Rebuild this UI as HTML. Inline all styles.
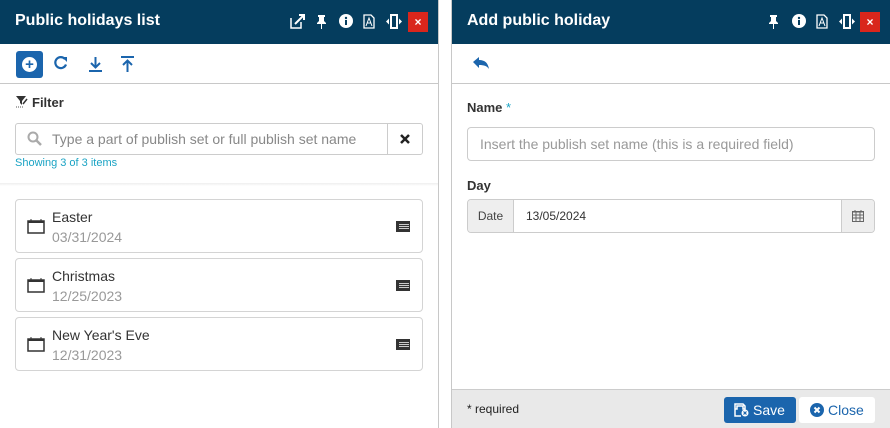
<!DOCTYPE html><html><head><style>
*{box-sizing:border-box;margin:0;padding:0}
body{width:890px;height:428px;background:#fff;font-family:"Liberation Sans",sans-serif;position:relative;overflow:hidden;color:#333}
.abs{position:absolute}
.hdr{background:#053d5e;height:44px;color:#fff;font-weight:bold;font-size:16px}
.hdr span.t{position:absolute;left:15px;top:12px}
.hdr svg{position:absolute;top:14px}
.x{position:absolute;top:12px;width:20px;height:20px;background:#d9261c;color:#fff;font-size:12px;text-align:center;line-height:20px}
.card{position:absolute;left:15px;width:408px;height:54px;border:1px solid #d4d4d4;border-radius:4px}
.card .n{position:absolute;left:36px;top:9px;font-size:14px;color:#333}
.card .d{position:absolute;left:36px;top:29px;font-size:14px;color:#999}
.card svg.c{position:absolute;left:11px;top:18px}
.card svg.l{position:absolute;right:12px;top:21px}
</style></head><body>
<!-- left panel -->
<div class="abs hdr" style="left:0;top:0;width:438px"><span class="t">Public holidays list</span>
<svg style="left:290px" width="15" height="15" viewBox="0 0 15 15"><path d="M1 4v10h10V8" fill="none" stroke="#fff" stroke-width="1.5"/><path d="M5 10L13 2M9 1h5v5" fill="none" stroke="#fff" stroke-width="2"/></svg>
<svg style="left:316px" width="11" height="15" viewBox="0 0 11 15"><path d="M2 1h7v2H8v4l2 2v1H1V9l2-2V3H2z M5 10h1v5H5z" fill="#fff"/></svg>
<svg style="left:339px" width="14" height="14" viewBox="0 0 14 14"><circle cx="7" cy="7" r="7" fill="#fff"/><rect x="6" y="6" width="2" height="5" fill="#053d5e"/><circle cx="7" cy="4" r="1.2" fill="#053d5e"/></svg>
<svg style="left:363px" width="12" height="15" viewBox="0 0 12 15"><path d="M1 1h7l3 3v10H1z" fill="none" stroke="#fff" stroke-width="1.3"/><path d="M3 12l3-8 3 8M4 9h4" fill="none" stroke="#fff" stroke-width="1"/></svg>
<svg style="left:386px" width="16" height="15" viewBox="0 0 16 15"><rect x="5" y="1" width="6" height="13" fill="none" stroke="#fff" stroke-width="2"/><path d="M0 7.5l3-3v6zM16 7.5l-3-3v6z" fill="#fff"/></svg>
<div class="x" style="left:408px">&#215;</div></div>
<div class="abs" style="left:438px;top:0;width:1px;height:428px;background:#c8c8c8"></div>
<div class="abs" style="left:16px;top:51px;width:27px;height:27px;background:#1b65ad;border-radius:3px"><div style="position:absolute;left:6px;top:6px;width:15px;height:15px;border-radius:50%;background:#fff;color:#1b65ad;font-weight:bold;font-size:15px;text-align:center;line-height:15px">+</div></div>
<svg class="abs" style="left:53px;top:55px" width="16" height="16" viewBox="0 0 16 16"><path d="M13 9.5A5.5 5.5 0 1 1 12 4" fill="none" stroke="#1b65ad" stroke-width="2.2"/><path d="M9 2h5v5z" fill="#1b65ad"/></svg>
<svg class="abs" style="left:88px;top:56px" width="15" height="16" viewBox="0 0 15 16"><path d="M7.5 1v10M3 7l4.5 4.5L12 7" fill="none" stroke="#1b65ad" stroke-width="2"/><rect x="1" y="14" width="13" height="2" fill="#1b65ad"/></svg>
<svg class="abs" style="left:120px;top:56px" width="15" height="16" viewBox="0 0 15 16"><rect x="1" y="0" width="13" height="2" fill="#1b65ad"/><path d="M7.5 16V5M3 9l4.5-4.5L12 9" fill="none" stroke="#1b65ad" stroke-width="2"/></svg>
<div class="abs" style="left:0;top:83px;width:438px;height:1px;background:#c8c8c8"></div>
<svg class="abs" style="left:15px;top:95px" width="14" height="13" viewBox="0 0 14 13"><path d="M1 1h10L7 6v4L5 8V6z" fill="#333"/><path d="M8 9l4-5" stroke="#333" stroke-width="1.5"/><path d="M1 12h8" stroke="#555" stroke-dasharray="1 1"/></svg>
<div class="abs" style="left:32px;top:95px;font-size:13px;font-weight:bold">Filter</div>
<div class="abs" style="left:15px;top:123px;width:408px;height:32px;border:1px solid #ccc;border-radius:3px"></div>
<div class="abs" style="left:387px;top:123px;width:1px;height:32px;background:#ccc"></div>
<svg class="abs" style="left:27px;top:131px" width="15" height="15" viewBox="0 0 15 15"><circle cx="6" cy="6" r="4.5" fill="none" stroke="#aaa" stroke-width="2"/><path d="M9.5 9.5L14 14" stroke="#aaa" stroke-width="2.5"/></svg>
<div class="abs" style="left:52px;top:131px;font-size:14px;color:#888">Type a part of publish set or full publish set name</div>
<svg class="abs" style="left:400px;top:134px" width="10" height="10" viewBox="0 0 10 10"><path d="M1 1l8 8M9 1l-8 8" stroke="#222" stroke-width="2.5"/></svg>
<div class="abs" style="left:15px;top:157px;font-size:11px;color:#1aa3c4">Showing 3 of 3 items</div>
<div class="abs" style="left:0;top:183px;width:438px;height:3px;background:linear-gradient(#eee,#fff)"></div>
<div class="card" style="top:199px"><svg class="c" width="18" height="16" viewBox="0 0 18 16"><rect x="1" y="3" width="16" height="12" fill="none" stroke="#333" stroke-width="1.5"/><rect x="1" y="3" width="16" height="2" fill="#333"/><path d="M4 1v3M14 1v3" stroke="#333"/></svg><div class="n">Easter</div><div class="d">03/31/2024</div><svg class="l" width="14" height="11"><rect width="14" height="11" fill="#333"/><path d="M3 3.5h10M3 5.5h10M3 7.5h10" stroke="#fff" stroke-width=".8"/></svg></div>
<div class="card" style="top:258px"><svg class="c" width="18" height="16" viewBox="0 0 18 16"><rect x="1" y="3" width="16" height="12" fill="none" stroke="#333" stroke-width="1.5"/><rect x="1" y="3" width="16" height="2" fill="#333"/><path d="M4 1v3M14 1v3" stroke="#333"/></svg><div class="n">Christmas</div><div class="d">12/25/2023</div><svg class="l" width="14" height="11"><rect width="14" height="11" fill="#333"/><path d="M3 3.5h10M3 5.5h10M3 7.5h10" stroke="#fff" stroke-width=".8"/></svg></div>
<div class="card" style="top:317px"><svg class="c" width="18" height="16" viewBox="0 0 18 16"><rect x="1" y="3" width="16" height="12" fill="none" stroke="#333" stroke-width="1.5"/><rect x="1" y="3" width="16" height="2" fill="#333"/><path d="M4 1v3M14 1v3" stroke="#333"/></svg><div class="n">New Year's Eve</div><div class="d">12/31/2023</div><svg class="l" width="14" height="11"><rect width="14" height="11" fill="#333"/><path d="M3 3.5h10M3 5.5h10M3 7.5h10" stroke="#fff" stroke-width=".8"/></svg></div>
<!-- right panel -->
<div class="abs" style="left:451px;top:0;width:1px;height:428px;background:#c8c8c8"></div>
<div class="abs hdr" style="left:452px;top:0;width:438px"><span class="t">Add public holiday</span>
<svg style="left:316px" width="11" height="15" viewBox="0 0 11 15"><path d="M2 1h7v2H8v4l2 2v1H1V9l2-2V3H2z M5 10h1v5H5z" fill="#fff"/></svg>
<svg style="left:340px" width="14" height="14" viewBox="0 0 14 14"><circle cx="7" cy="7" r="7" fill="#fff"/><rect x="6" y="6" width="2" height="5" fill="#053d5e"/><circle cx="7" cy="4" r="1.2" fill="#053d5e"/></svg>
<svg style="left:364px" width="12" height="15" viewBox="0 0 12 15"><path d="M1 1h7l3 3v10H1z" fill="none" stroke="#fff" stroke-width="1.3"/><path d="M3 12l3-8 3 8M4 9h4" fill="none" stroke="#fff" stroke-width="1"/></svg>
<svg style="left:387px" width="16" height="15" viewBox="0 0 16 15"><rect x="5" y="1" width="6" height="13" fill="none" stroke="#fff" stroke-width="2"/><path d="M0 7.5l3-3v6zM16 7.5l-3-3v6z" fill="#fff"/></svg>
<div class="x" style="left:408px">&#215;</div></div>
<svg class="abs" style="left:473px;top:57px" width="16" height="13" viewBox="0 0 16 13"><path d="M0 5l6-5v3c6 0 9 3 10 9-2-3-5-4-10-4v3z" fill="#1b65ad"/></svg>
<div class="abs" style="left:452px;top:83px;width:438px;height:1px;background:#c8c8c8"></div>
<div class="abs" style="left:467px;top:100px;font-size:13px;font-weight:bold">Name <span style="color:#1aa3c4;font-weight:normal">*</span></div>
<div class="abs" style="left:467px;top:127px;width:408px;height:34px;border:1px solid #ccc;border-radius:4px"></div>
<div class="abs" style="left:480px;top:136px;font-size:14px;color:#999">Insert the publish set name (this is a required field)</div>
<div class="abs" style="left:467px;top:178px;font-size:13px;font-weight:bold">Day</div>
<div class="abs" style="left:467px;top:199px;width:408px;height:34px;border:1px solid #ccc;border-radius:4px;overflow:hidden">
<div style="position:absolute;left:0;top:0;width:46px;height:32px;background:#eee;border-right:1px solid #ccc;font-size:12px;line-height:32px;text-align:center;color:#444">Date</div>
<div style="position:absolute;left:58px;top:0;font-size:12px;line-height:32px;color:#333">13/05/2024</div>
<div style="position:absolute;right:0;top:0;width:33px;height:32px;background:#eee;border-left:1px solid #ccc"><svg style="position:absolute;left:10px;top:10px" width="12" height="12" viewBox="0 0 12 12"><rect x=".5" y="1.5" width="11" height="10" fill="none" stroke="#666"/><path d="M0 2h12M.5 5h11M.5 8h11M4 2v10M8 2v10" stroke="#666"/><path d="M3 0v2M9 0v2" stroke="#666"/></svg></div></div>
<div class="abs" style="left:452px;top:389px;width:438px;height:39px;background:#e9e9e9;border-top:1px solid #ccc"></div>
<div class="abs" style="left:467px;top:402px;font-size:12px;color:#222">* required</div>
<div class="abs" style="left:724px;top:397px;width:72px;height:26px;background:#1b65ad;border-radius:3px;color:#fff;font-size:14px;line-height:26px;padding-left:29px">Save
<svg style="position:absolute;left:10px;top:6px" width="15" height="14" viewBox="0 0 15 14"><path d="M1 1h8l2 2v3H9V3H3v3H1zM1 6v7h6" fill="none" stroke="#fff" stroke-width="1.5"/><circle cx="11" cy="10" r="3.5" fill="#fff"/><path d="M9.5 8.5l3 3M12.5 8.5l-3 3" stroke="#1b65ad" stroke-width="1.2"/></svg></div>
<div class="abs" style="left:799px;top:397px;width:76px;height:26px;background:#fff;border-radius:3px;color:#1b65ad;font-size:14px;line-height:26px;padding-left:29px">Close
<svg style="position:absolute;left:11px;top:6px" width="14" height="14" viewBox="0 0 14 14"><circle cx="7" cy="7" r="7" fill="#1b65ad"/><path d="M4.5 4.5l5 5M9.5 4.5l-5 5" stroke="#fff" stroke-width="2"/></svg></div>
</body></html>
